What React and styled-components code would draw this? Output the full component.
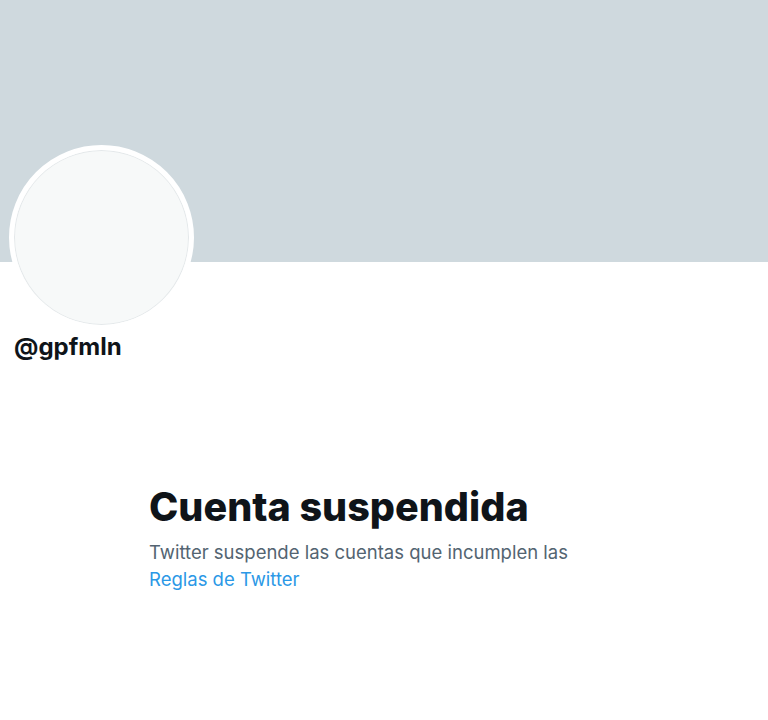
import React from "react";
import styled, { createGlobalStyle } from "styled-components";

const GlobalStyle = createGlobalStyle`
	body {
		margin: 0;
		background: #ffffff;
		font-family: Inter, "Liberation Sans", sans-serif;
	}
`;

const App = () => {
	return (
		<>
			<GlobalStyle />
			<Page>
				<Banner />
				<ProfileHead>
					<Avatar />
					<Handle>@gpfmln</Handle>
				</ProfileHead>
				<Notice>
					<h1>Cuenta suspendida</h1>
					<p>
						Twitter suspende las cuentas que incumplen las
						<br />
						<a href="#">Reglas de Twitter</a>
					</p>
				</Notice>
			</Page>
		</>
	);
};

const Page = styled.div`
	width: 768px;
	height: 720px;
	overflow: hidden;
	display: flex;
	flex-direction: column;
`;

const Banner = styled.div`
	height: 262px;
	background-color: #cfd9de;
	flex-shrink: 0;
`;

const ProfileHead = styled.div`
	padding-left: 9px;
	margin-top: -117px;
	display: flex;
	flex-direction: column;
`;

const Avatar = styled.div`
	width: 175px;
	height: 175px;
	border-radius: 50%;
	border: 5px solid #ffffff;
	background-color: #f7f9f9;
	box-shadow: inset 0 0 0 1px #e4e8ea;
`;

const Handle = styled.div`
	margin-top: 2px;
	padding-left: 5px;
	font-size: 24px;
	font-weight: 700;
	color: #0f1419;
`;

const Notice = styled.div`
	padding-left: 149px;
	margin-top: 122px;

	h1 {
		margin: 0;
		font-size: 39.5px;
		font-weight: 800;
		color: #0f1419;
		letter-spacing: 0;
	}

	p {
		margin: 8px 0 0;
		font-size: 18.5px;
		line-height: 27px;
		color: #536471;
	}

	a {
		color: #2b98e6;
		text-decoration: none;
	}
`;

export default App;
